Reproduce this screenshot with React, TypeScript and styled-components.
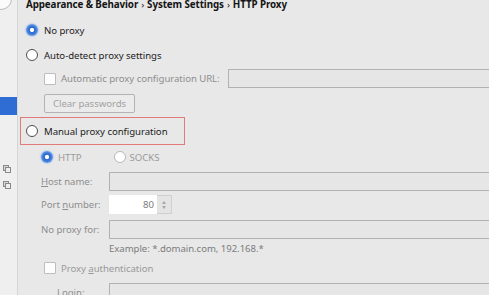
import React from "react";
import styled, { createGlobalStyle, css } from "styled-components";

const Global = createGlobalStyle`
  html, body { margin: 0; padding: 0; }
  body { width: 489px; height: 295px; overflow: hidden; background: #e8e8e8; }
  * { box-sizing: border-box; }
`;

const Page = styled.div`
  display: flex;
  width: 489px;
  height: 295px;
  overflow: hidden;
  background: #e8e8e8;
  font-family: "Noto Sans", "Liberation Sans", sans-serif;
  font-size: 9.6px;
  letter-spacing: -0.05px;
  color: #1c1c1c;
`;

const Sidebar = styled.div`
  flex: none;
  width: 18px;
  background: #efefef;
  border-right: 1px solid #d6d6d6;
  display: flex;
  flex-direction: column;
`;

const SearchCap = styled.div`
  width: 22px;
  height: 22px;
  margin: -12px 0 0 -10px;
  border-radius: 50%;
  background: #fbfbfb;
  border: 1px solid #b9b9b9;
`;

const Selection = styled.div`
  margin-top: 87px;
  height: 18px;
  width: 17px;
  background: #2f6cd4;
`;

const TreeIcon = styled.div<{ $gap: number }>`
  margin: ${(p) => p.$gap}px 0 0 3px;
  width: 8px;
  height: 8px;
  display: flex;
`;

const Main = styled.div`
  flex: 1;
  min-width: 0;
  display: flex;
  flex-direction: column;
  padding-left: 8px;
`;

const Breadcrumb = styled.div`
  margin-top: -1px;
  height: 12px;
  line-height: 12px;
  font-weight: 700;
  font-size: 9.8px;
  letter-spacing: -0.1px;
  color: #141414;
  white-space: nowrap;
`;

const Sep = styled.span`
  font-weight: 400;
  margin: 0 3px;
`;

const Row = styled.div<{ $top: number; $h: number; $indent?: number }>`
  display: flex;
  align-items: center;
  flex: none;
  margin-top: ${(p) => p.$top}px;
  height: ${(p) => p.$h}px;
  padding-left: ${(p) => p.$indent ?? 0}px;
  white-space: nowrap;
`;

const Radio = styled.span<{ $checked?: boolean; $disabled?: boolean }>`
  flex: none;
  width: 12px;
  height: 12px;
  border-radius: 50%;
  ${(p) =>
    p.$checked
      ? css`
          background: radial-gradient(circle, #ffffff 0 1.6px, #2c68cc 2.6px, #3b78d8 4px, #6a9fe6 6px);
          box-shadow: 0 0 1.5px 0.5px #9dbdf0;
        `
      : css`
          background: #ffffff;
          border: 1px solid ${p.$disabled ? "#b8b8b8" : "#4d4d4d"};
        `}
`;

const Text = styled.span<{ $muted?: boolean; $gap?: number }>`
  margin-left: ${(p) => p.$gap ?? 6}px;
  color: ${(p) => (p.$muted ? "#9a9a9a" : "#1c1c1c")};
`;

const Check = styled.span`
  flex: none;
  width: 12px;
  height: 12px;
  background: #fdfdfd;
  border: 1px solid #bdbdbd;
  border-radius: 1px;
`;

const Label = styled.span<{ $w: number; $muted?: boolean; $gap?: number }>`
  flex: none;
  width: ${(p) => p.$w}px;
  margin-left: ${(p) => p.$gap ?? 0}px;
  color: ${(p) => (p.$muted ? "#8e8e8e" : "#1c1c1c")};
`;

const Field = styled.div`
  flex: 1;
  align-self: stretch;
  background: #e6e6e6;
  border: 1px solid #b2b2b2;
  border-right: none;
  margin-right: -4px;
`;

const Button = styled.div`
  margin-left: 18px;
  width: 91px;
  height: 19px;
  display: flex;
  align-items: center;
  justify-content: center;
  border: 1px solid #b3b3b3;
  border-radius: 2px;
  background: #ebebeb;
  color: #a2a2a2;
`;

const Highlight = styled.div`
  margin: 4px 0 0 -6px;
  width: 165px;
  height: 28px;
  border: 1px solid #e27a7a;
  display: flex;
  align-items: center;
  padding-left: 5px;
  flex: none;
`;

const Spinner = styled.div`
  display: flex;
  align-self: stretch;
`;

const SpinValue = styled.div`
  width: 48px;
  background: #ffffff;
  color: #7a7a7a;
  padding-right: 3px;
  display: flex;
  align-items: center;
  justify-content: flex-end;
`;

const SpinButtons = styled.div`
  width: 15px;
  background: #e4e4e4;
  border: 1px solid #cfcfcf;
  border-left: none;
  display: flex;
  flex-direction: column;
  align-items: center;
  justify-content: center;
  gap: 2px;
`;

const Arrow = styled.span<{ $up?: boolean }>`
  width: 0;
  height: 0;
  border-left: 2.5px solid transparent;
  border-right: 2.5px solid transparent;
  ${(p) => (p.$up ? "border-bottom: 3px solid #a8a8a8;" : "border-top: 3px solid #a8a8a8;")}
`;

const Hint = styled.span`
  color: #7c7c7c;
`;

const U = styled.span`
  text-decoration: underline;
`;

const CopyIcon = () => (
  <svg width="8" height="8" viewBox="0 0 8 8" fill="none" stroke="#8a8a8a" strokeWidth="1">
    <rect x="0.5" y="0.5" width="5" height="5" fill="#d8d8d8" />
    <rect x="2.5" y="2.5" width="5" height="5" fill="#eeeeee" />
  </svg>
);

export default function App() {
  return (
    <>
      <Global />
      <Page>
        <Sidebar>
          <SearchCap />
          <Selection />
          <TreeIcon $gap={50}>
            <CopyIcon />
          </TreeIcon>
          <TreeIcon $gap={8}>
            <CopyIcon />
          </TreeIcon>
        </Sidebar>
        <Main>
          <Breadcrumb>
            Appearance &amp; Behavior<Sep>›</Sep>System Settings<Sep>›</Sep>HTTP Proxy
          </Breadcrumb>
          <Row $top={9} $h={20}>
            <Radio $checked />
            <Text>No proxy</Text>
          </Row>
          <Row $top={5} $h={20}>
            <Radio />
            <Text>Auto-detect proxy settings</Text>
          </Row>
          <Row $top={4} $h={19} $indent={18}>
            <Check />
            <Label $w={167} $muted $gap={5}>
              Automatic proxy configuration URL:
            </Label>
            <Field />
          </Row>
          <Row $top={6} $h={19}>
            <Button>Clear passwords</Button>
          </Row>
          <Highlight>
            <Radio />
            <Text>Manual proxy configuration</Text>
          </Highlight>
          <Row $top={3} $h={18} $indent={15}>
            <Radio $checked $disabled />
            <Text $muted $gap={5}>
              HTTP
            </Text>
            <Radio $disabled style={{ marginLeft: 32 }} />
            <Text $muted $gap={4}>
              SOCKS
            </Text>
          </Row>
          <Row $top={6} $h={19} $indent={15}>
            <Label $w={68} $muted>
              <U>H</U>ost name:
            </Label>
            <Field />
          </Row>
          <Row $top={4} $h={19} $indent={15}>
            <Label $w={68} $muted>
              Port <U>n</U>umber:
            </Label>
            <Spinner>
              <SpinValue>80</SpinValue>
              <SpinButtons>
                <Arrow $up />
                <Arrow />
              </SpinButtons>
            </Spinner>
          </Row>
          <Row $top={6} $h={19} $indent={15}>
            <Label $w={68} $muted>
              No proxy for:
            </Label>
            <Field />
          </Row>
          <Row $top={2} $h={14} $indent={83}>
            <Hint>Example: *.domain.com, 192.168.*</Hint>
          </Row>
          <Row $top={6} $h={14} $indent={18}>
            <Check />
            <Text $muted $gap={5}>
              Proxy <U>a</U>uthentication
            </Text>
          </Row>
          <Row $top={8} $h={19} $indent={31}>
            <Label $w={52} $muted>
              Login:
            </Label>
            <Field />
          </Row>
        </Main>
      </Page>
    </>
  );
}
